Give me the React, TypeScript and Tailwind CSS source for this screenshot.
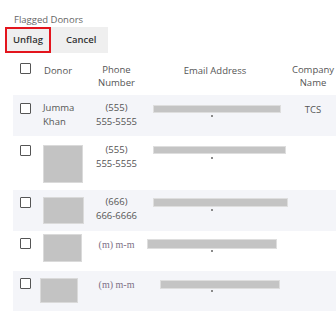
import React from 'react';

type Row = {
  shade: boolean;
  h: string;
  donor: React.ReactNode;
  phone: React.ReactNode;
  email: string;
  company?: string;
};

const Check = ({ top }: { top: string }) => (
  <div className={`ml-[7px] h-[11px] w-[11px] shrink-0 rounded-[1px] border-[1.5px] border-[#555] bg-white ${top}`} />
);

const Block = ({ cls }: { cls: string }) => (
  <div className={`border border-[#dadada] bg-[#c3c3c3] ${cls}`} />
);

const Redacted = () => (
  <span className="font-['Liberation_Serif',serif] text-[10px] text-[#7d6f86]">(m) m-m</span>
);

const rows: Row[] = [
  {
    shade: true,
    h: 'h-[41px] pt-[8px]',
    donor: (
      <div className="-mt-[2px] leading-[14px]">
        Jumma
        <br />
        Khan
      </div>
    ),
    phone: (
      <div className="-mt-[2px] text-center leading-[14px]">
        (555)
        <br />
        555-5555
      </div>
    ),
    email: 'ml-[10px] mt-[2px] h-[8px] w-[128px]',
    company: 'TCS',
  },
  {
    shade: false,
    h: 'h-[54px] pt-[9px]',
    donor: <Block cls="h-[38px] w-[40px]" />,
    phone: (
      <div className="-mt-[2px] text-center leading-[14px]">
        (555)
        <br />
        555-5555
      </div>
    ),
    email: 'ml-[10px] mt-[1px] h-[8px] w-[133px]',
  },
  {
    shade: true,
    h: 'h-[41px] pt-[7px]',
    donor: <Block cls="h-[27px] w-[41px]" />,
    phone: (
      <div className="-mt-[2px] text-center leading-[14px]">
        (666)
        <br />
        666-6666
      </div>
    ),
    email: 'ml-[10px] mt-[1px] h-[9px] w-[135px]',
  },
  {
    shade: false,
    h: 'h-[40px] pt-[7px]',
    donor: <Block cls="-mt-[4px] h-[28px] w-[39px]" />,
    phone: (
      <div className="-mt-[1px] text-center">
        <Redacted />
      </div>
    ),
    email: 'ml-[4px] mt-[1px] h-[10px] w-[130px]',
  },
  {
    shade: true,
    h: 'h-[40px] pt-[7px]',
    donor: <Block cls="-ml-[3px] h-[25px] w-[38px]" />,
    phone: (
      <div className="-mt-[1px] text-center">
        <Redacted />
      </div>
    ),
    email: 'ml-[17px] mt-[2px] h-[9px] w-[120px]',
  },
];

export default function App() {
  return (
    <div className="h-[334px] w-[336px] overflow-hidden bg-white font-['Open_Sans',sans-serif] text-[9.5px] text-[#555]">
      <div className="pl-[14px] pt-[14px] text-[9.5px] leading-[12px] text-[#666]">Flagged Donors</div>
      <div className="ml-[5px] mt-[1px] flex h-[26px] w-[103px] items-center bg-[#efefef]">
        <button className="flex h-[26px] w-[46px] items-center justify-center border-[2px] border-[#e3151d] text-[9.5px] font-semibold text-[#333]">
          Unflag
        </button>
        <button className="ml-[15px] text-[9.5px] font-semibold text-[#333]">Cancel</button>
      </div>

      <div className="ml-[13px] mt-[2px] w-[330px]">
        {/* header */}
        <div className="flex h-[40px] items-start pt-[8px] leading-[13px]">
          <div className="w-[27px]">
            <Check top="mt-0" />
          </div>
          <div className="w-[50px] pl-[4px] pt-[1px]">Donor</div>
          <div className="w-[53px] text-center">
            Phone
            <br />
            Number
          </div>
          <div className="w-[144px] pt-[1px] text-center">Email Address</div>
          <div className="w-[52px] text-center">
            Company
            <br />
            Name
          </div>
        </div>

        {rows.map((r, i) => (
          <div key={i} className={`flex items-start ${r.h} ${r.shade ? 'bg-[#f4f5f9]' : 'bg-white'}`}>
            <div className="w-[27px]">
              <Check top="mt-0" />
            </div>
            <div className="w-[50px] pl-[3px]">{r.donor}</div>
            <div className="w-[53px]">{r.phone}</div>
            <div className="relative w-[144px]">
              <div className={`border border-[#dedede] bg-[#c4c4c4] ${r.email}`} />
              <div className="absolute left-[68px] top-[12px] h-[2px] w-[2px] bg-[#8a8a8a]" />
            </div>
            <div className="w-[52px] text-center">{r.company}</div>
          </div>
        ))}
      </div>
    </div>
  );
}
